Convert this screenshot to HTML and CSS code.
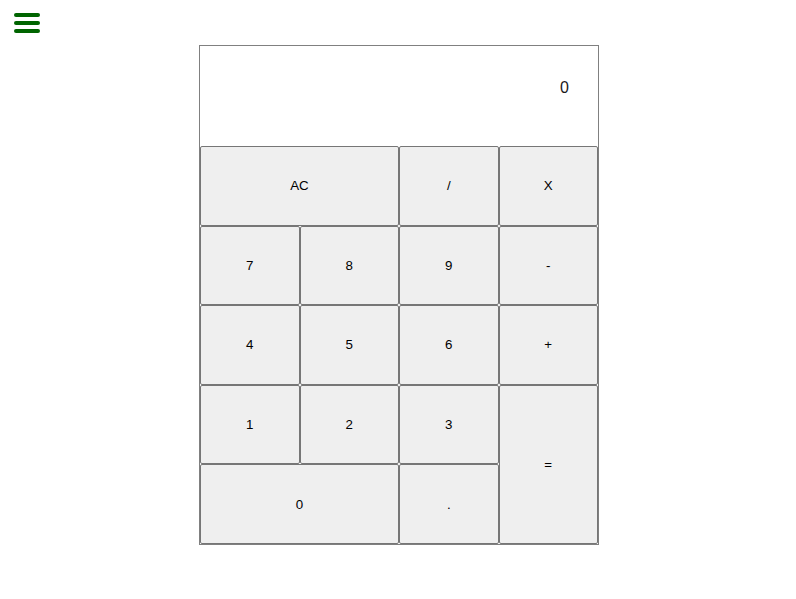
FILE: index.html
```html
<!DOCTYPE html>
<html lang="en">
<head>
  <meta charset="UTF-8" />
  <meta name="viewport" content="width=device-width, initial-scale=1.0" />
  <title>Calculator</title>
  <link rel="stylesheet" href="styles.css">
</head>
<body>

<div class="top-bar">
  <svg class="menu-icon" width="26" height="20" viewBox="0 0 26 20">
    <rect x="0" y="0" width="26" height="4" rx="2" />
    <rect x="0" y="8" width="26" height="4" rx="2" />
    <rect x="0" y="16" width="26" height="4" rx="2" />
  </svg>
</div>

<div id="calculator">
  <div id="display">0</div>
  <div class="keys">
    <button class="key wide">AC</button>
    <button class="key">/</button>
    <button class="key">X</button>
    <button class="key">7</button>
    <button class="key">8</button>
    <button class="key">9</button>
    <button class="key">-</button>
    <button class="key">4</button>
    <button class="key">5</button>
    <button class="key">6</button>
    <button class="key">+</button>
    <button class="key">1</button>
    <button class="key">2</button>
    <button class="key">3</button>
    <button class="key tall">=</button>
    <button class="key wide">0</button>
    <button class="key">.</button>
  </div>
</div>

</body>
</html>
```

FILE: styles.css
```css
body {
  margin: 0;
  padding: 0 0 0 2px;
  background: #ffffff;
  font-family: 'Liberation Sans', Arial, sans-serif;
  color: #000000;
}
.top-bar {
  padding: 13px 12px 12px;
  height: 20px;
}
.menu-icon {
  display: block;
  fill: #006400;
}
#calculator {
  width: 398px;
  margin: 0 auto;
  border: 1px solid #808080;
  background: #ffffff;
}
#display {
  height: 100px;
  box-sizing: border-box;
  padding: 33px 29px 0;
  text-align: right;
  font-size: 16px;
  line-height: 18px;
  color: #1a1a1a;
}
.keys {
  display: grid;
  grid-template-columns: repeat(4, 1fr);
  grid-auto-rows: 79.6px;
}
.key {
  margin: 0;
  font-family: 'Liberation Sans', Arial, sans-serif;
  font-size: 13.33px;
  color: #000000;
  background: #efefef;
  border: 1px solid #767676;
  border-radius: 2px;
  padding: 0;
  cursor: pointer;
}
.key:hover {
  background: #e5e5e5;
}
.wide {
  grid-column: span 2;
}
.tall {
  grid-row: span 2;
}
```
